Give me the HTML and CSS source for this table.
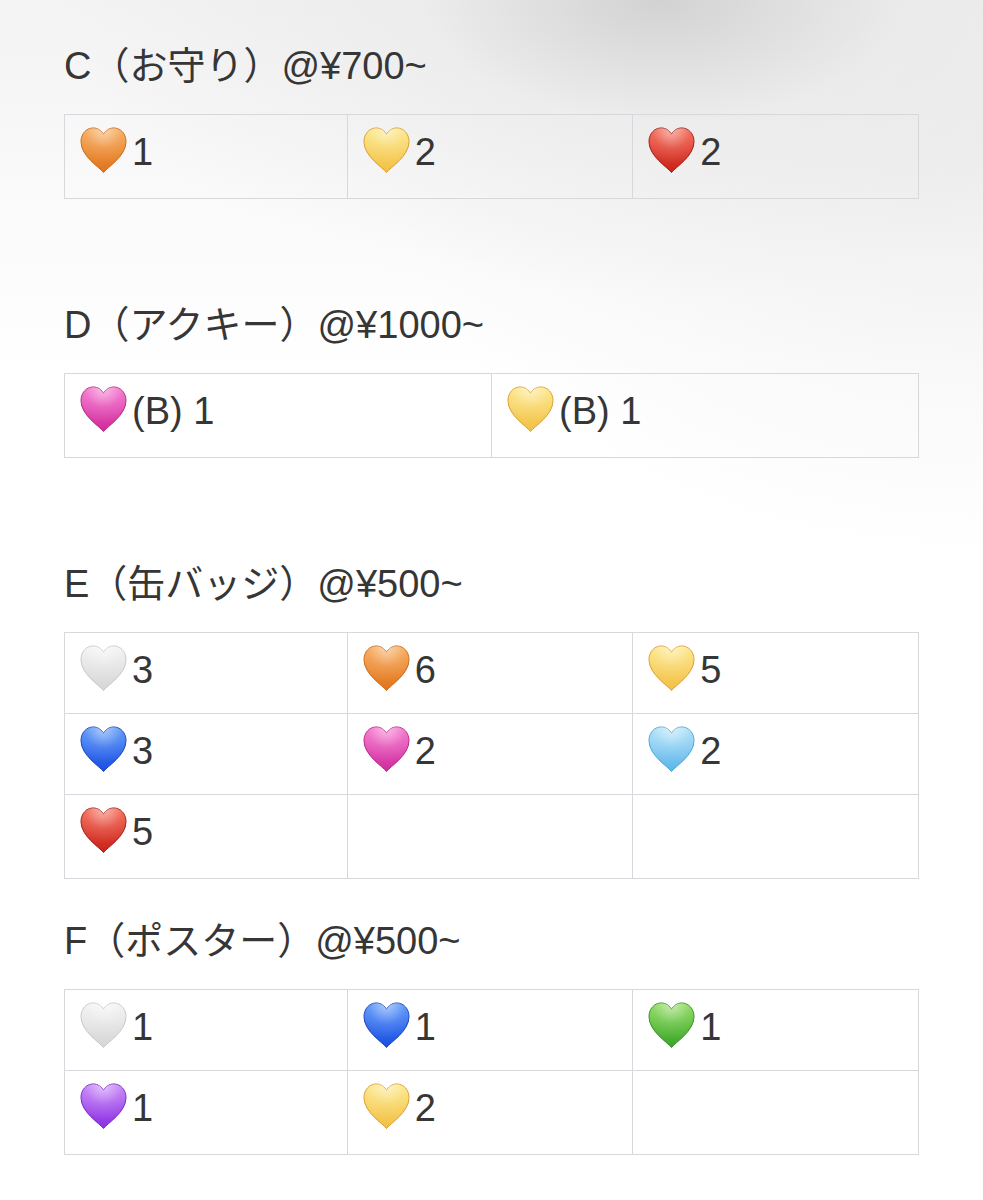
FILE: index.html
```html
<!DOCTYPE html>
<html lang="ja">
<head>
<meta charset="utf-8">
<title>Stock</title>
<link rel="stylesheet" href="styles.css">
</head>
<body>
<svg class="defs" aria-hidden="true">
  <defs>
    <radialGradient id="shine" cx="0.5" cy="0.05" r="0.75">
      <stop offset="0" stop-color="#fff" stop-opacity="0.55"/>
      <stop offset="0.55" stop-color="#fff" stop-opacity="0.12"/>
      <stop offset="1" stop-color="#fff" stop-opacity="0"/>
    </radialGradient>
    <linearGradient id="g-orange" x1="0" y1="0" x2="0" y2="1"><stop offset="0" stop-color="#f7a550"/><stop offset="1" stop-color="#e0741c"/></linearGradient>
    <linearGradient id="g-yellow" x1="0" y1="0" x2="0" y2="1"><stop offset="0" stop-color="#fce680"/><stop offset="1" stop-color="#f2bf45"/></linearGradient>
    <linearGradient id="g-red" x1="0" y1="0" x2="0" y2="1"><stop offset="0" stop-color="#f4604d"/><stop offset="1" stop-color="#c92219"/></linearGradient>
    <linearGradient id="g-pink" x1="0" y1="0" x2="0" y2="1"><stop offset="0" stop-color="#f56ccb"/><stop offset="1" stop-color="#cf2c9c"/></linearGradient>
    <linearGradient id="g-white" x1="0" y1="0" x2="0" y2="1"><stop offset="0" stop-color="#f2f2f2"/><stop offset="1" stop-color="#d5d5d5"/></linearGradient>
    <linearGradient id="g-blue" x1="0" y1="0" x2="0" y2="1"><stop offset="0" stop-color="#4d8ffa"/><stop offset="1" stop-color="#1b4ee0"/></linearGradient>
    <linearGradient id="g-sky" x1="0" y1="0" x2="0" y2="1"><stop offset="0" stop-color="#ace0f8"/><stop offset="1" stop-color="#5cb5ea"/></linearGradient>
    <linearGradient id="g-green" x1="0" y1="0" x2="0" y2="1"><stop offset="0" stop-color="#86d851"/><stop offset="1" stop-color="#3aa52a"/></linearGradient>
    <linearGradient id="g-purple" x1="0" y1="0" x2="0" y2="1"><stop offset="0" stop-color="#c27cf7"/><stop offset="1" stop-color="#8a2fe2"/></linearGradient>
    <symbol id="heart" viewBox="0 0 48 48">
      <path d="M24 46.5C20.5 41.5 1 30 1 15C1 7 6.5 1 13.5 1C18.5 1 22 4 24 7.5C26 4 29.5 1 34.5 1C41.5 1 47 7 47 15C47 30 27.5 41.5 24 46.5Z"/>
      <path d="M24 46.5C20.5 41.5 1 30 1 15C1 7 6.5 1 13.5 1C18.5 1 22 4 24 7.5C26 4 29.5 1 34.5 1C41.5 1 47 7 47 15C47 30 27.5 41.5 24 46.5Z" fill="url(#shine)" stroke="none"/>
    </symbol>
  </defs>
</svg>

<main class="page">
  <section class="sec">
    <h2 class="title">C（お守り）@¥700~</h2>
    <div class="grid g3">
      <div class="c last"><svg class="hr" viewBox="0 0 48 48"><use href="#heart" fill="url(#g-orange)" stroke="#c86614"/></svg><span class="n">1</span></div>
      <div class="c last"><svg class="hr" viewBox="0 0 48 48"><use href="#heart" fill="url(#g-yellow)" stroke="#dc9a2c"/></svg><span class="n">2</span></div>
      <div class="c last"><svg class="hr" viewBox="0 0 48 48"><use href="#heart" fill="url(#g-red)" stroke="#9d1a12"/></svg><span class="n">2</span></div>
    </div>
  </section>

  <section class="sec">
    <h2 class="title">D（アクキー）@¥1000~</h2>
    <div class="grid g2">
      <div class="c last"><svg class="hr" viewBox="0 0 48 48"><use href="#heart" fill="url(#g-pink)" stroke="#b0247f"/></svg><span class="n">(B) 1</span></div>
      <div class="c last"><svg class="hr" viewBox="0 0 48 48"><use href="#heart" fill="url(#g-yellow)" stroke="#dc9a2c"/></svg><span class="n">(B) 1</span></div>
    </div>
  </section>

  <section class="sec">
    <h2 class="title">E（缶バッジ）@¥500~</h2>
    <div class="grid g3">
      <div class="c"><svg class="hr" viewBox="0 0 48 48"><use href="#heart" fill="url(#g-white)" stroke="#c6c6c6"/></svg><span class="n">3</span></div>
      <div class="c"><svg class="hr" viewBox="0 0 48 48"><use href="#heart" fill="url(#g-orange)" stroke="#c86614"/></svg><span class="n">6</span></div>
      <div class="c"><svg class="hr" viewBox="0 0 48 48"><use href="#heart" fill="url(#g-yellow)" stroke="#dc9a2c"/></svg><span class="n">5</span></div>
      <div class="c"><svg class="hr" viewBox="0 0 48 48"><use href="#heart" fill="url(#g-blue)" stroke="#163fb4"/></svg><span class="n">3</span></div>
      <div class="c"><svg class="hr" viewBox="0 0 48 48"><use href="#heart" fill="url(#g-pink)" stroke="#b0247f"/></svg><span class="n">2</span></div>
      <div class="c"><svg class="hr" viewBox="0 0 48 48"><use href="#heart" fill="url(#g-sky)" stroke="#4aa2d8"/></svg><span class="n">2</span></div>
      <div class="c last"><svg class="hr" viewBox="0 0 48 48"><use href="#heart" fill="url(#g-red)" stroke="#9d1a12"/></svg><span class="n">5</span></div>
      <div class="c last"></div>
      <div class="c last"></div>
    </div>
  </section>

  <section class="sec tight">
    <h2 class="title">F（ポスター）@¥500~</h2>
    <div class="grid g3">
      <div class="c"><svg class="hr" viewBox="0 0 48 48"><use href="#heart" fill="url(#g-white)" stroke="#c6c6c6"/></svg><span class="n">1</span></div>
      <div class="c"><svg class="hr" viewBox="0 0 48 48"><use href="#heart" fill="url(#g-blue)" stroke="#163fb4"/></svg><span class="n">1</span></div>
      <div class="c"><svg class="hr" viewBox="0 0 48 48"><use href="#heart" fill="url(#g-green)" stroke="#2f8d22"/></svg><span class="n">1</span></div>
      <div class="c last"><svg class="hr" viewBox="0 0 48 48"><use href="#heart" fill="url(#g-purple)" stroke="#7424c4"/></svg><span class="n">1</span></div>
      <div class="c last"><svg class="hr" viewBox="0 0 48 48"><use href="#heart" fill="url(#g-yellow)" stroke="#dc9a2c"/></svg><span class="n">2</span></div>
      <div class="c last"></div>
    </div>
  </section>
</main>
</body>
</html>
```

FILE: styles.css
```css
html {
  background: #ffffff;
}

body {
  margin: 0;
  min-height: 1200px;
  font-family: "Liberation Sans", "Noto Sans CJK JP", sans-serif;
  color: #363636;
  background:
    radial-gradient(ellipse 600px 300px at 660px 0px, rgba(205, 205, 205, 0.85) 0%, rgba(230, 230, 230, 0.5) 40%, rgba(255, 255, 255, 0) 100%),
    radial-gradient(ellipse 600px 420px at 983px 140px, rgba(232, 232, 232, 0.6) 0%, rgba(255, 255, 255, 0) 100%),
    linear-gradient(to bottom, #f3f3f3 0px, #fafafa 200px, #ffffff 380px);
  background-repeat: no-repeat;
}

.defs {
  position: absolute;
  width: 0;
  height: 0;
  overflow: hidden;
}

.page {
  padding: 43px 64px 0;
}

.sec + .sec {
  margin-top: 103px;
}

.sec.tight {
  margin-top: 39px;
}

.title {
  margin: 0 0 25px;
  height: 46px;
  font-size: 38px;
  line-height: 46px;
  font-weight: 400;
  white-space: nowrap;
}

.grid {
  display: grid;
  border-top: 1px solid #d7d7dc;
  border-left: 1px solid #d7d7dc;
}

.g3 {
  grid-template-columns: 283fr 286fr 286fr;
}

.g2 {
  grid-template-columns: 1fr 1fr;
}

.c {
  box-sizing: border-box;
  height: 81px;
  display: flex;
  align-items: flex-start;
  padding: 12px 0 0 15px;
  border-right: 1px solid #d7d7dc;
  border-bottom: 1px solid #d7d7dc;
}

.c.last {
  height: 84px;
}

.hr {
  flex: none;
  width: 47px;
  height: 47px;
  margin-right: 5px;
  overflow: visible;
}

.n {
  font-size: 38px;
  line-height: 47px;
  padding-top: 2px;
  white-space: nowrap;
}
```
